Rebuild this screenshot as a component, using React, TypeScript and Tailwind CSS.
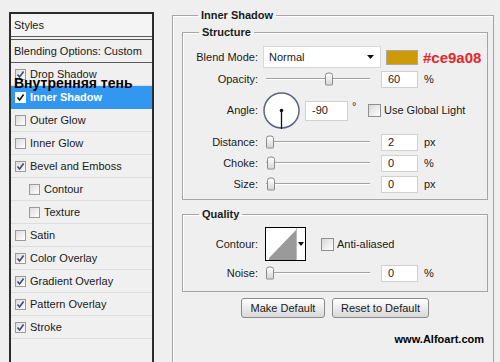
import React from 'react';

const Check = ({ checked, light }: { checked: boolean; light?: boolean }) => (
  <span
    className={`inline-flex h-[11px] w-[11px] shrink-0 items-center justify-center border ${
      light ? 'border-white bg-white' : 'border-[#9a9a9a] bg-gradient-to-br from-[#dcdcdc] to-white'
    }`}
  >
    {checked && (
      <svg width="9" height="9" viewBox="0 0 9 9">
        <path d="M1.5 4.5 L3.6 7 L7.6 1.5" fill="none" stroke={light ? '#111' : '#3b4a7a'} strokeWidth="1.6" />
      </svg>
    )}
  </span>
);

const Box = ({ size = 13 }: { size?: number }) => (
  <span
    className="inline-block shrink-0 border border-[#8f8f8f] bg-gradient-to-br from-[#d8d8d8] to-white"
    style={{ width: size, height: size }}
  />
);

const styleRows = [
  { name: 'Drop Shadow', on: true },
  { name: 'Inner Shadow', on: true, active: true },
  { name: 'Outer Glow', on: false },
  { name: 'Inner Glow', on: false },
  { name: 'Bevel and Emboss', on: true },
  { name: 'Contour', on: false, sub: true },
  { name: 'Texture', on: false, sub: true },
  { name: 'Satin', on: false },
  { name: 'Color Overlay', on: true },
  { name: 'Gradient Overlay', on: true },
  { name: 'Pattern Overlay', on: true },
  { name: 'Stroke', on: true },
];

const Field = ({ value, w = 37, h = 17 }: { value: string; w?: number; h?: number }) => (
  <div
    className="flex shrink-0 items-center border border-[#d0d0d0] bg-white pl-[6px]"
    style={{ width: w, height: h }}
  >
    {value}
  </div>
);

const Slider = ({ pos }: { pos: number }) => (
  <div className="relative ml-[8px] flex h-full w-[104px] shrink-0 items-center">
    <div className="h-[2px] w-full border-t border-[#a3a3a3] border-b border-b-white" />
    <div
      className="absolute top-1/2 h-[13px] w-[8px] -translate-y-1/2 rounded-t-[3px] rounded-b-[1px] border border-[#8a8a8a] bg-gradient-to-b from-white to-[#d6d6d6]"
      style={{ left: pos }}
    />
  </div>
);

const Label = ({ children }: { children: React.ReactNode }) => (
  <div className="w-[75px] shrink-0 text-right">{children}</div>
);

const SliderRow = ({ label, pos, value, unit, mt }: { label: string; pos: number; value: string; unit: string; mt: string }) => (
  <div className={`flex h-[18px] items-center ${mt}`}>
    <Label>{label}</Label>
    <Slider pos={pos} />
    <div className="ml-[11px]">
      <Field value={value} />
    </div>
    <span className="ml-[6px]">{unit}</span>
  </div>
);

export default function App() {
  return (
    <div className="relative flex h-[362px] w-[500px] overflow-hidden bg-[#efefef] font-['Liberation_Sans',Arial,sans-serif] text-[11px] leading-[13px] text-[#1a1a1a]">
      {/* styles list */}
      <div className="relative ml-[9px] mt-[12px] flex h-[370px] w-[145px] shrink-0 flex-col border-2 border-b-0 border-[#2b2b2b] bg-[#f0f0f0]">
        <div className="flex h-[23px] items-center border-b border-[#5a5a5a] bg-[#f4f4f4] pl-[3px]">Styles</div>
        <div className="mt-[2px] flex h-[24px] items-center border-y border-[#5a5a5a] pl-[3px]">Blending Options: Custom</div>
        {styleRows.map(r => (
          <div
            key={r.name}
            className={`flex h-[23px] items-center gap-[4px] border-b ${
              r.active ? 'border-[#3297f0] bg-[#3297f0] font-bold text-white' : 'border-[#dddddd]'
            } ${r.sub ? 'pl-[18px]' : 'pl-[4px]'}`}
          >
            <Check checked={r.on} light={r.active} />
            <span>{r.name}</span>
          </div>
        ))}
        <span className="absolute left-[3px] top-[62px] text-[14px] font-bold leading-[14px] text-black">
          Внутренняя тень
        </span>
      </div>

      {/* settings */}
      <fieldset className="ml-[18px] mt-[9px] h-[380px] w-[322px] shrink-0 border border-[#a5a5a5] pl-[9px] pr-[5px] shadow-[inset_1px_1px_0_#fff]">
        <legend className="ml-[16px] px-[3px] font-bold">Inner Shadow</legend>

        <fieldset className="mt-[4px] border border-[#a5a5a5] pb-[6px] pt-[7px] shadow-[inset_1px_1px_0_#fff]">
          <legend className="ml-[16px] px-[3px] font-bold">Structure</legend>

          <div className="flex h-[22px] items-center">
            <Label>Blend Mode:</Label>
            <div className="ml-[5px] flex h-[22px] w-[118px] shrink-0 items-center justify-between border border-[#d8d8d8] bg-white pl-[5px] pr-[6px]">
              <span>Normal</span>
              <svg width="7" height="4" viewBox="0 0 7 4">
                <path d="M0 0 H7 L3.5 4 Z" fill="#111" />
              </svg>
            </div>
            <div className="ml-[5px] h-[15px] w-[32px] shrink-0 border border-[#a8a8a8] bg-[#ce9a08]" />
            <span className="ml-[5px] text-[15px] font-bold leading-none text-[#e0282c]">#ce9a08</span>
          </div>

          <SliderRow label="Opacity:" pos={59} value="60" unit="%" mt="mt-[2px]" />

          <div className="mt-[4px] flex h-[37px] items-center">
            <Label>Angle:</Label>
            <svg className="ml-[5px] shrink-0" width="37" height="37" viewBox="0 0 37 37">
              <circle cx="18.5" cy="18.5" r="17.5" fill="#fff" stroke="#5d6487" strokeWidth="1.5" />
              <line x1="18.5" y1="18.5" x2="18.5" y2="37" stroke="#111" strokeWidth="1.3" />
              <circle cx="18.5" cy="18.5" r="1.8" fill="#111" />
            </svg>
            <div className="ml-[5px]">
              <Field value="-90" w={43} h={20} />
            </div>
            <span className="ml-[4px] mb-[8px] w-[10px]">°</span>
            <span className="ml-[6px] flex items-center">
              <Box />
            </span>
            <span className="ml-[3px]">Use Global Light</span>
          </div>

          <SliderRow label="Distance:" pos={0} value="2" unit="px" mt="mt-[4px]" />
          <SliderRow label="Choke:" pos={1} value="0" unit="%" mt="mt-[3px]" />
          <SliderRow label="Size:" pos={1} value="0" unit="px" mt="mt-[3px]" />
        </fieldset>

        <fieldset className="mt-[8px] border border-[#a5a5a5] pb-[9px] pt-[6px] shadow-[inset_1px_1px_0_#fff]">
          <legend className="ml-[16px] px-[3px] font-bold">Quality</legend>

          <div className="flex h-[34px] items-center">
            <Label>Contour:</Label>
            <div className="ml-[7px] flex h-[34px] w-[41px] shrink-0 border border-black bg-white">
              <svg width="30" height="32" viewBox="0 0 30 32">
                <path d="M3 30 L30 2 V32 H3 Z" fill="#9a9a9a" />
              </svg>
              <div className="flex flex-1 items-center justify-center border-l border-[#bbb]">
                <svg width="6" height="4" viewBox="0 0 6 4">
                  <path d="M0 0 H6 L3 4 Z" fill="#111" />
                </svg>
              </div>
            </div>
            <span className="ml-[15px] flex items-center">
              <Box />
            </span>
            <span className="ml-[3px]">Anti-aliased</span>
          </div>

          <SliderRow label="Noise:" pos={0} value="0" unit="%" mt="mt-[3px]" />
        </fieldset>

        <div className="mt-[6px] flex justify-center gap-[7px]">
          <button className="h-[20px] w-[84px] rounded-[3px] border border-[#8a8a8a] bg-gradient-to-b from-white to-[#d8d8d8]">
            Make Default
          </button>
          <button className="h-[20px] w-[97px] rounded-[3px] border border-[#8a8a8a] bg-gradient-to-b from-white to-[#d8d8d8]">
            Reset to Default
          </button>
        </div>

        <div className="mt-[15px] pr-[4px] text-right font-bold text-black">www.Alfoart.com</div>
      </fieldset>
    </div>
  );
}
